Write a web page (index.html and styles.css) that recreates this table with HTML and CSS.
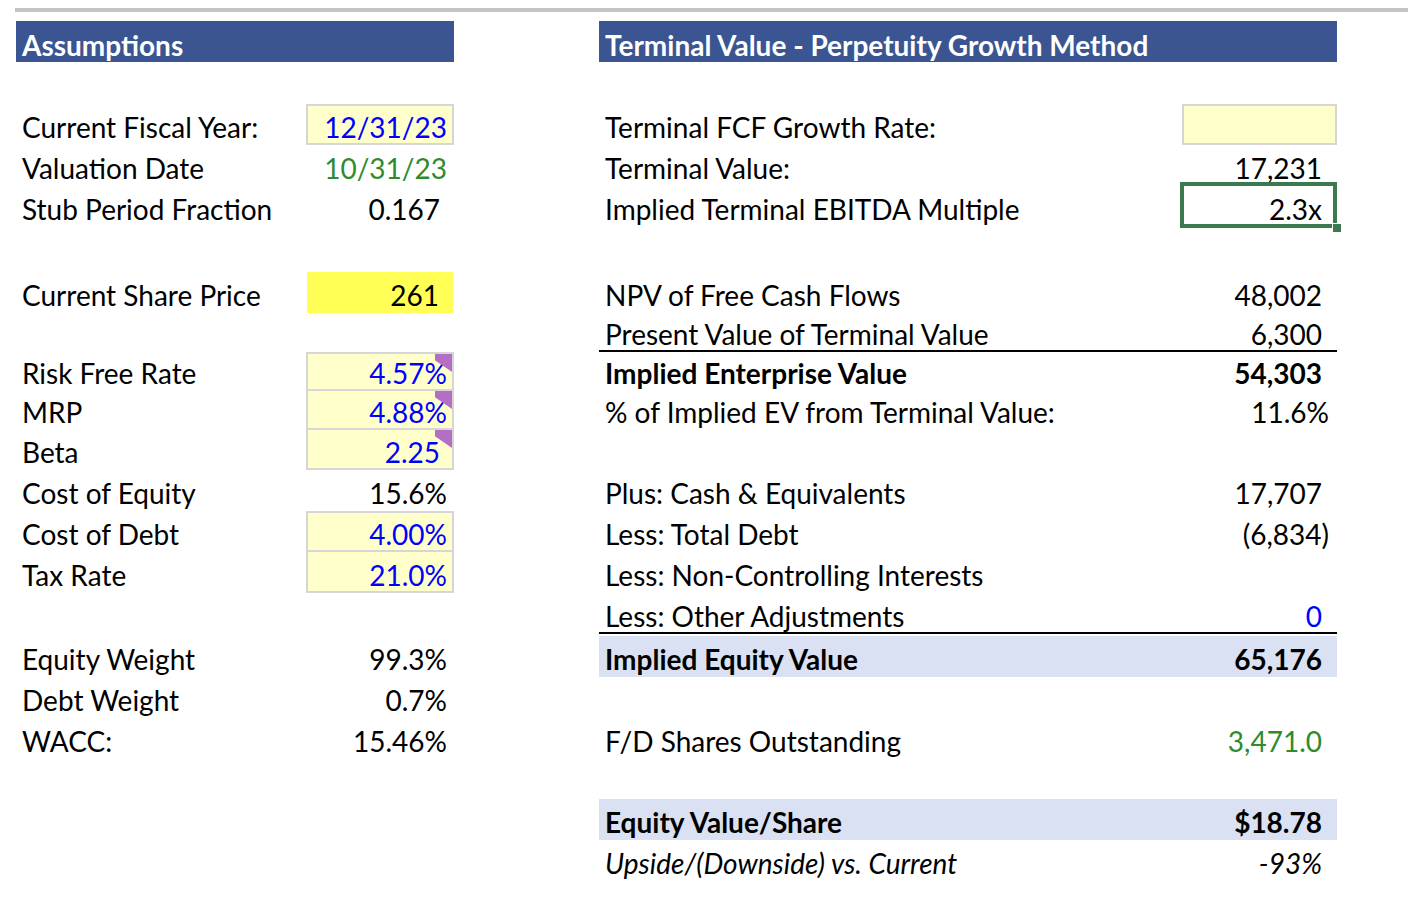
FILE: index.html
```html
<!DOCTYPE html>
<html lang="en">
<head>
<meta charset="utf-8">
<title>DCF - Terminal Value</title>
<link rel="stylesheet" href="styles.css">
</head>
<body>
<main class="sheet">
  <div class="rule"></div>
  <div class="panels">
    <section class="grid grid-left">
      <div class="hdr">Assumptions</div>
      <div class="blank"></div>
      <div class="lbl">Current Fiscal Year:</div><div class="val input blue">12/31/23</div>
      <div class="lbl">Valuation Date</div><div class="val green">10/31/23</div>
      <div class="lbl">Stub Period Fraction</div><div class="val pad">0.167</div>
      <div class="blank"></div>
      <div class="lbl">Current Share Price</div><div class="val hilite pad">261</div>
      <div class="blank"></div>
      <div class="lbl">Risk Free Rate</div><div class="val input blue"><span class="note"></span>4.57%</div>
      <div class="lbl">MRP</div><div class="val input blue"><span class="note"></span>4.88%</div>
      <div class="lbl">Beta</div><div class="val input blue pad"><span class="note"></span>2.25</div>
      <div class="lbl">Cost of Equity</div><div class="val">15.6%</div>
      <div class="lbl">Cost of Debt</div><div class="val input blue">4.00%</div>
      <div class="lbl">Tax Rate</div><div class="val input blue">21.0%</div>
      <div class="blank"></div>
      <div class="lbl">Equity Weight</div><div class="val">99.3%</div>
      <div class="lbl">Debt Weight</div><div class="val">0.7%</div>
      <div class="lbl">WACC:</div><div class="val">15.46%</div>
    </section>

    <section class="grid grid-right">
      <div class="hdr">Terminal Value - Perpetuity Growth Method</div>
      <div class="blank"></div>
      <div class="lbl">Terminal FCF Growth Rate:</div><div class="val input"></div>
      <div class="lbl">Terminal Value:</div><div class="val pad">17,231</div>
      <div class="lbl">Implied Terminal EBITDA Multiple</div><div class="val pad selected">2.3x<span class="sel-box"></span><span class="sel-handle"></span></div>
      <div class="blank"></div>
      <div class="lbl">NPV of Free Cash Flows</div><div class="val pad">48,002</div>
      <div class="lbl under">Present Value of Terminal Value</div><div class="val pad under">6,300</div>
      <div class="lbl bold">Implied Enterprise Value</div><div class="val pad bold">54,303</div>
      <div class="lbl">% of Implied EV from Terminal Value:</div><div class="val">11.6%</div>
      <div class="blank"></div>
      <div class="lbl">Plus: Cash &amp; Equivalents</div><div class="val pad">17,707</div>
      <div class="lbl">Less: Total Debt</div><div class="val">(6,834)</div>
      <div class="lbl">Less: Non-Controlling Interests</div><div class="val pad"></div>
      <div class="lbl under">Less: Other Adjustments</div><div class="val pad blue under">0</div>
      <div class="lbl bold shade after-rule">Implied Equity Value</div><div class="val pad bold shade after-rule">65,176</div>
      <div class="blank"></div>
      <div class="lbl">F/D Shares Outstanding</div><div class="val pad green">3,471.0</div>
      <div class="blank"></div>
      <div class="lbl bold shade">Equity Value/Share</div><div class="val pad bold shade">$18.78</div>
      <div class="lbl ital">Upside/(Downside) vs. Current</div><div class="val pad ital">-93%</div>
    </section>
  </div>
</main>
</body>
</html>
```
FILE: styles.css
```css
html, body {
  margin: 0;
  padding: 0;
  background: #ffffff;
}

body {
  font-family: "Lato", "Liberation Sans", sans-serif;
  font-size: 28px;
  color: #000000;
}

.sheet {
  width: 1408px;
  padding-top: 8px;
}

.rule {
  margin-left: 15px;
  height: 4px;
  background: #c3c3c3;
}

.panels {
  display: flex;
  gap: 145px;
  margin-top: 9px;
  padding-left: 16px;
}

.grid {
  display: grid;
  grid-template-rows: 41px 42px 41px 41px 41px 45px 41px 39px 39px 39px 40px 41px 41px 41px 41px 43px 41px 41px 40px 41px 41px;
  align-content: start;
}

.grid-left {
  grid-template-columns: 290px 148px;
}

.grid-right {
  grid-template-columns: 583px 155px;
}

.hdr,
.lbl,
.val {
  display: flex;
  align-items: flex-end;
  line-height: 32px;
  padding-bottom: 2px;
  box-sizing: border-box;
  white-space: nowrap;
}

.hdr {
  grid-column: 1 / -1;
  background: #3a5592;
  color: #ffffff;
  font-weight: 700;
  padding-left: 6px;
  padding-bottom: 1px;
}

.blank {
  grid-column: 1 / -1;
}

.lbl {
  padding-left: 6px;
}

.val {
  justify-content: flex-end;
  padding-right: 7px;
  position: relative;
}

.grid-right .val {
  padding-right: 8px;
}

.val.pad {
  padding-right: 14px;
}

.grid-right .val.pad {
  padding-right: 15px;
}

.input {
  background: #ffffcc;
  border: 2px solid #d6d6d6;
}

.grid .val.input {
  padding-right: 5px;
  padding-bottom: 0;
}

.grid .val.input.pad {
  padding-right: 12px;
}

.input + .lbl + .input {
  border-top: 0;
}

.hilite {
  background: #ffff55;
  margin: 0 1px;
}

.blue {
  color: #0000ff;
}

.green {
  color: #2e8b2e;
}

.bold {
  font-weight: 700;
}

.ital {
  font-style: italic;
}

.shade {
  background: #d9e1f2;
}

.after-rule {
  margin-top: 2px;
}

.under {
  border-bottom: 2px solid #000000;
  padding-bottom: 0;
}

.note {
  position: absolute;
  top: 0;
  right: 0;
  width: 17px;
  height: 18px;
  background: #b46ec6;
  clip-path: polygon(0 0, 100% 0, 100% 100%, 0 35%);
}

.sel-box {
  position: absolute;
  top: -4px;
  left: -2px;
  right: 0;
  bottom: -1px;
  border: 4px solid #3b7a4f;
  box-sizing: border-box;
}

.sel-handle {
  position: absolute;
  right: -4px;
  bottom: -5px;
  width: 8px;
  height: 8px;
  background: #3b7a4f;
  border-left: 1px solid #ffffff;
  border-top: 1px solid #ffffff;
}
```
